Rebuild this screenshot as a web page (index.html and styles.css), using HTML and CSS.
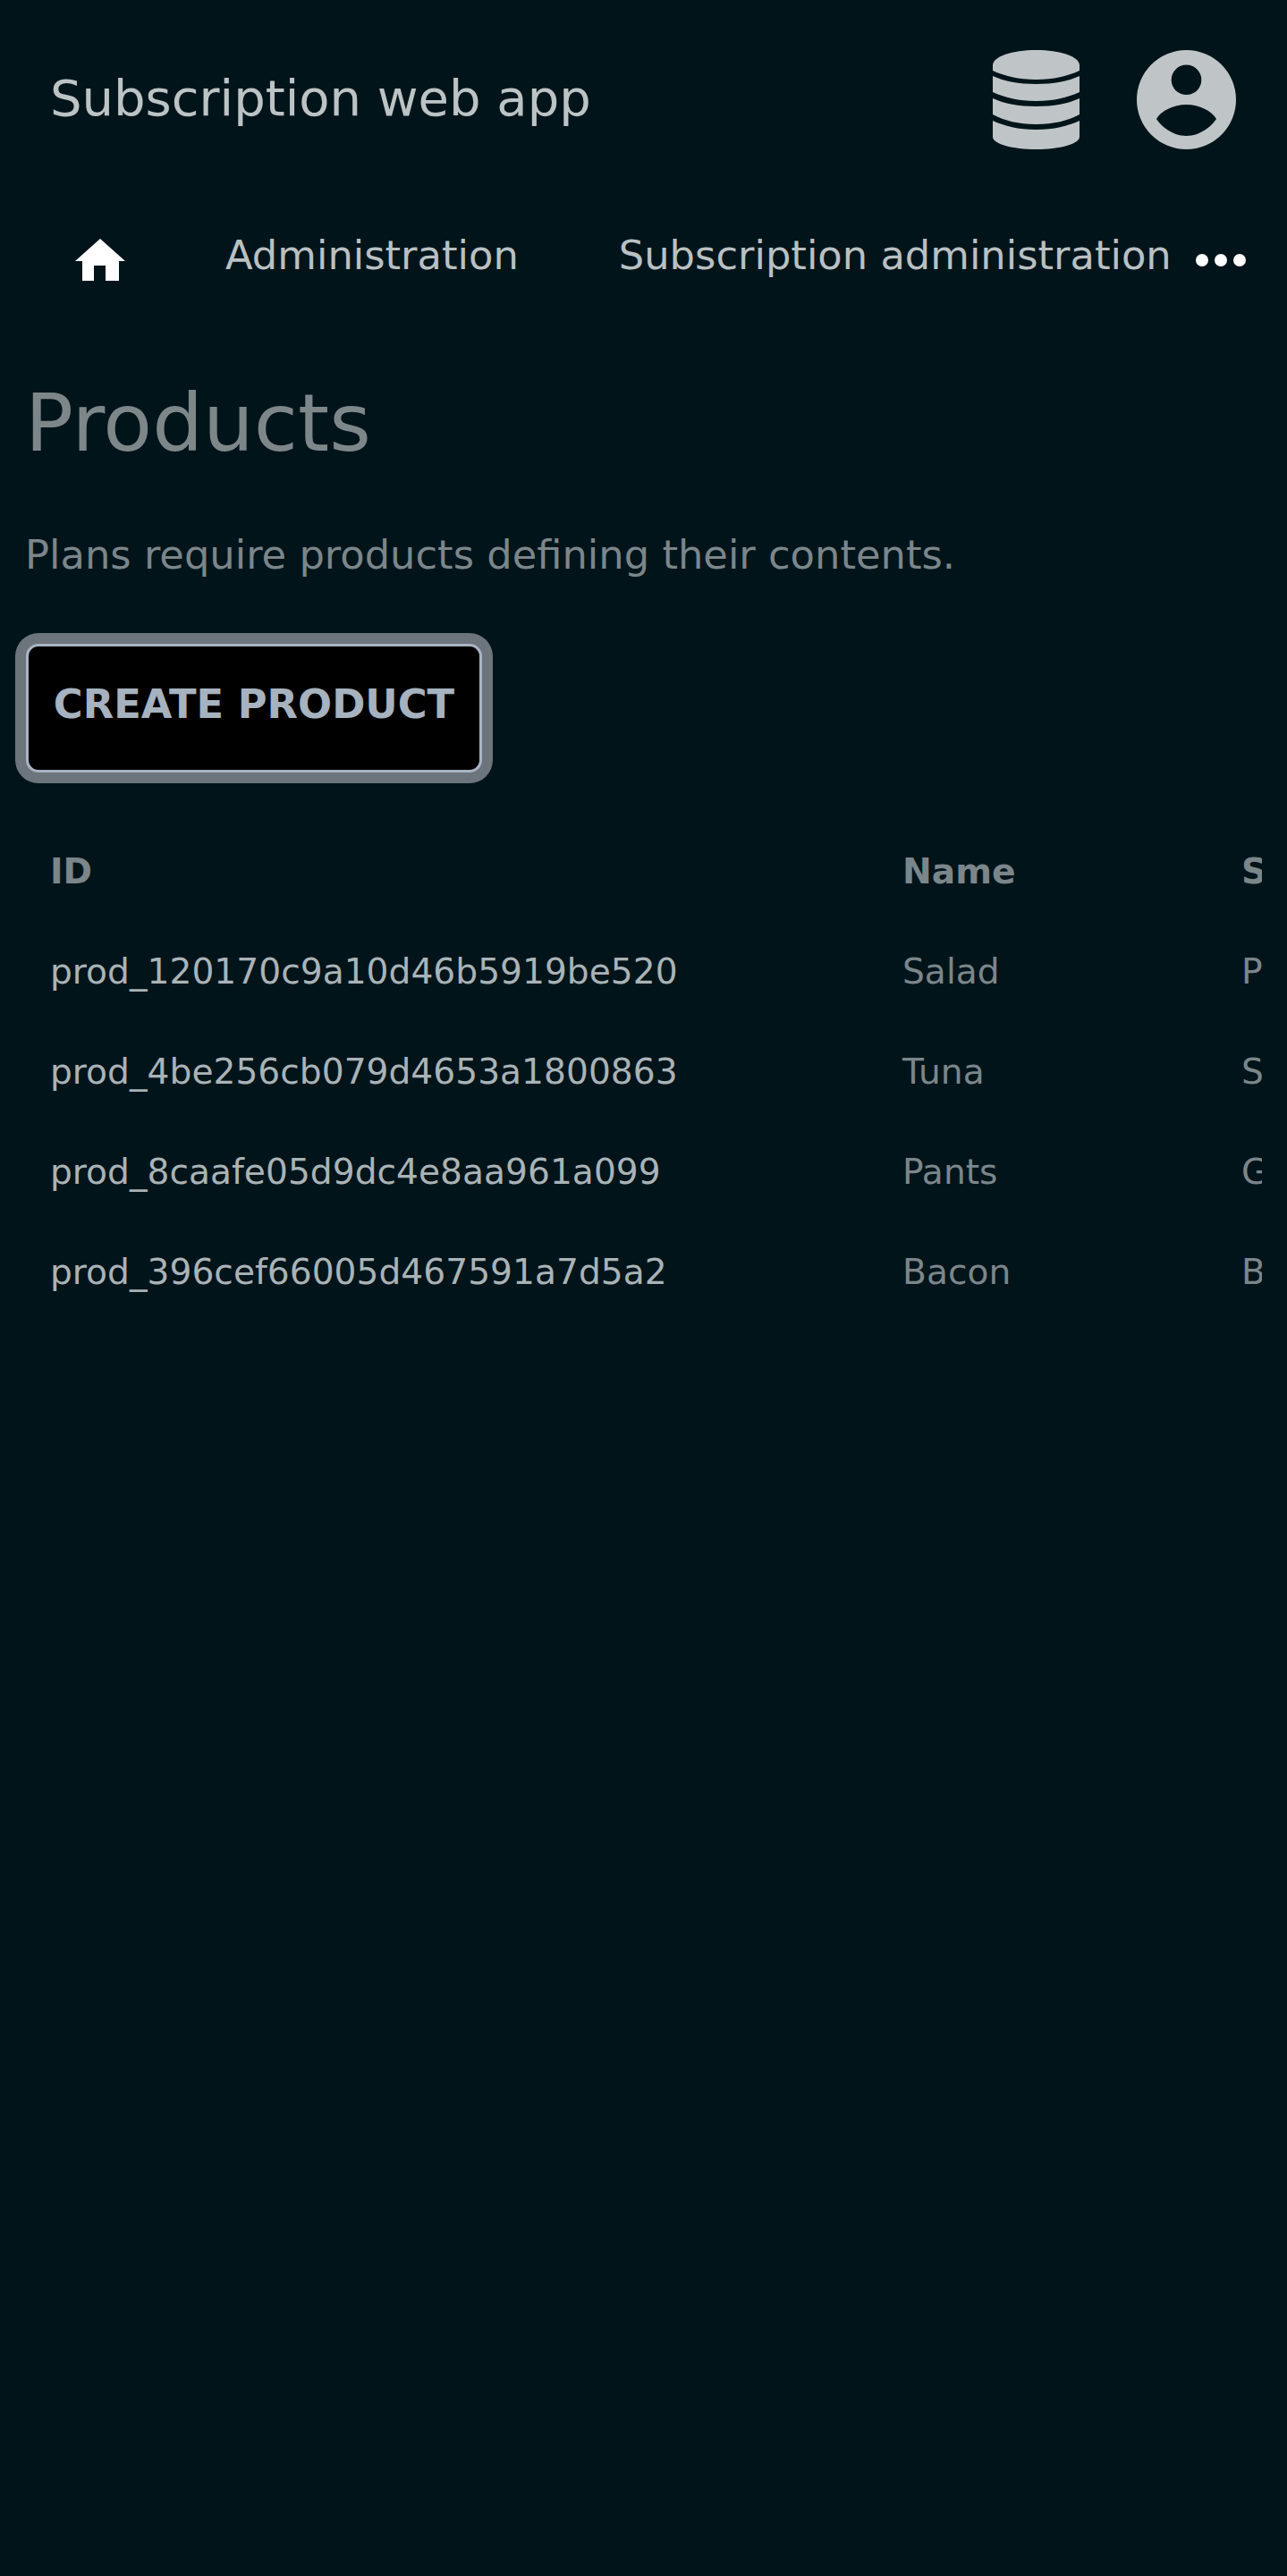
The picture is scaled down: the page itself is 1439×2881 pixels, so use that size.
FILE: index.html
```html
<!DOCTYPE html>
<html lang="en">
<head>
  <meta charset="UTF-8" />
  <meta name="viewport" content="width=device-width, initial-scale=1.0" />
  <title>Products</title>
  <link rel="stylesheet" href="styles.css">
</head>
<body>
  <header class="topbar">
    <div class="app-name">Subscription web app</div>
    <div class="top-icons">
      <svg class="icon-db" viewBox="0 0 97 111" aria-hidden="true">
        <path d="M48.500 0C75 0 97 7 97 17V23C84 29 68 33 48.500 33S13 29 0 23V17C0 7 22 0 48.500 0Z"/>
        <path d="M0 29C13 35 29 38 48.500 38S84 35 97 29V47C84 53 68 57 48.500 57S13 53 0 47Z"/>
        <path d="M0 54C13 60 29 63 48.500 63S84 60 97 54V72C84 79 68 83 48.500 83S13 79 0 72Z"/>
        <path d="M0 79C13 85 29 89 48.500 89S84 85 97 79V97C97 105 75 111 48.500 111S0 105 0 97Z"/>
      </svg>
      <svg class="icon-user" viewBox="0 0 111 111" aria-hidden="true">
        <path fill-rule="evenodd" d="M55.500 0A55.500 55.500 0 1 1 55.500 111A55.500 55.500 0 1 1 55.500 0ZM55.500 16.500A16.800 16.800 0 1 0 55.500 50.100A16.800 16.800 0 1 0 55.500 16.500ZM22 77C27 85 40 96 55.500 96S84 85 89 77C84 68 70 61 55.500 61S27 68 22 77Z"/>
      </svg>
    </div>
  </header>

  <nav class="menu">
    <a class="menu-home" href="#">
      <svg viewBox="0 0 56 47" aria-hidden="true">
        <path d="M28 0L56 25H49V47H34V30H21V47H8V25H0Z"/>
      </svg>
    </a>
    <a class="menu-link" href="#">Administration</a>
    <a class="menu-link" href="#">Subscription administration</a>
    <svg class="menu-more" viewBox="0 0 56 14" aria-hidden="true">
      <circle cx="7" cy="7" r="7"/>
      <circle cx="28" cy="7" r="7"/>
      <circle cx="49" cy="7" r="7"/>
    </svg>
  </nav>

  <main class="content">
    <h1>Products</h1>
    <p class="lead">Plans require products defining their contents.</p>
    <button class="btn-create">CREATE PRODUCT</button>

    <div class="table-wrap">
      <table class="products">
        <thead>
          <tr><th>ID</th><th>Name</th><th>S</th></tr>
        </thead>
        <tbody>
          <tr><td class="id">prod_120170c9a10d46b5919be520</td><td>Salad</td><td>P</td></tr>
          <tr><td class="id">prod_4be256cb079d4653a1800863</td><td>Tuna</td><td>S</td></tr>
          <tr><td class="id">prod_8caafe05d9dc4e8aa961a099</td><td>Pants</td><td>G</td></tr>
          <tr><td class="id">prod_396cef66005d467591a7d5a2</td><td>Bacon</td><td>B</td></tr>
        </tbody>
      </table>
    </div>
  </main>
</body>
</html>
```

FILE: styles.css
```css
html, body {
  margin: 0;
  padding: 0;
}

body {
  min-height: 2881px;
  background: #00141a;
  font-family: "DejaVu Sans", sans-serif;
  color: #bcc3c4;
  overflow-x: hidden;
}

.topbar {
  display: flex;
  align-items: center;
  justify-content: space-between;
  padding: 56px 57px 0 56px;
  height: 111px;
}

.app-name {
  padding-bottom: 3px;
  font-size: 56px;
  line-height: 1;
}

.top-icons {
  display: flex;
  align-items: center;
  gap: 64px;
}

.top-icons svg {
  display: block;
  height: 111px;
  fill: #bfc5c6;
}

.icon-db {
  width: 97px;
}

.icon-user {
  width: 111px;
}

.menu {
  display: flex;
  align-items: center;
  margin-top: 100px;
  padding-left: 84px;
  height: 47px;
}

.menu-home {
  display: block;
  width: 56px;
  height: 47px;
  margin-right: 112px;
}

.menu-home svg {
  display: block;
  width: 56px;
  height: 47px;
  fill: #fff;
}

.menu-link {
  margin-right: 112px;
  padding-bottom: 9px;
  font-size: 44.800px;
  line-height: 1.2;
  color: #b9c0c2;
  text-decoration: none;
  white-space: nowrap;
}

.menu-link + .menu-link {
  margin-right: 27px;
}

.menu-more {
  display: block;
  width: 56px;
  height: 14px;
  fill: #fff;
}

.content {
  padding: 0 28px;
}

h1 {
  margin: 106px 0 0;
  font-size: 89.600px;
  font-weight: 400;
  line-height: 1.2;
  color: #7d8789;
}

.lead {
  margin: 66px 0 0;
  font-size: 44.800px;
  line-height: 1.2;
  color: #7b868a;
}

.btn-create {
  display: block;
  box-sizing: border-box;
  margin: 73px 0 0 1px;
  padding: 0 0 10px;
  width: 510px;
  height: 144px;
  background: #000;
  border: 3px solid #a8b4c2;
  border-radius: 14px;
  box-shadow: 0 0 0 12px #6c747c;
  font-family: inherit;
  font-size: 44.800px;
  font-weight: 700;
  color: #a6b2bf;
  cursor: pointer;
}

.table-wrap {
  margin-top: 54px;
  overflow: hidden;
}

.products {
  border-collapse: collapse;
  table-layout: fixed;
  width: 1500px;
}

.products th,
.products td {
  height: 112px;
  padding: 0 0 0 28px;
  font-size: 39.200px;
  text-align: left;
  color: #7b868a;
  white-space: nowrap;
}

.products th {
  font-weight: 700;
}

.products th:nth-child(1) {
  width: 925px;
}

.products th:nth-child(2) {
  width: 351px;
}

.products td.id {
  color: #a9b3b6;
}
```
